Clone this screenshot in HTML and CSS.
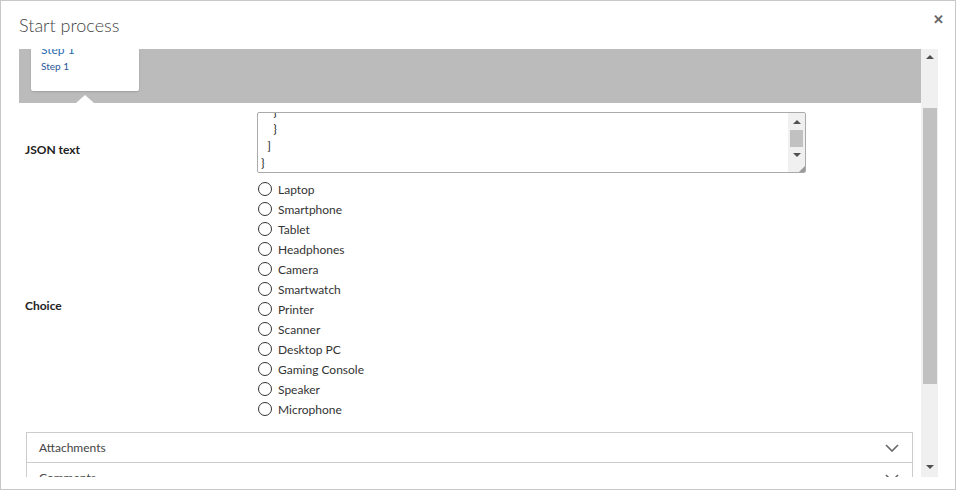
FILE: index.html
```html
<!DOCTYPE html>
<html lang="en">
<head>
    <meta charset="UTF-8">
    <meta name="viewport" content="width=device-width, initial-scale=1.0">
    <title>Start process</title>
    <link rel="stylesheet" href="styles.css">
</head>
<body>
    <div class="dialog">
        <div class="header">
            <h1>Start process</h1>
            <span class="close">&#x2715;</span>
        </div>

        <div class="body">
            <div class="viewport">
                <div class="steps">
                    <div class="step-card">
                        <div class="step-title">Step 1</div>
                        <div class="step-sub">Step 1</div>
                    </div>
                    <span class="notch"></span>
                </div>

                <div class="form-row row-json">
                    <div class="field-label">JSON text</div>
                    <div class="field">
                        <div class="fake-textarea">
                            <div class="ta-text">
                                <div class="ta-line">&nbsp;&nbsp;&nbsp;&nbsp;}</div>
                                <div class="ta-line">&nbsp;&nbsp;&nbsp;&nbsp;}</div>
                                <div class="ta-line">&nbsp;&nbsp;]</div>
                                <div class="ta-line">}</div>
                            </div>
                            <div class="ta-scroll">
                                <span class="arrow-up"></span>
                                <span class="ta-thumb"></span>
                                <span class="arrow-down"></span>
                            </div>
                            <span class="grip"></span>
                        </div>
                    </div>
                </div>

                <div class="form-row row-choice">
                    <div class="field-label">Choice</div>
                    <div class="field radios">
                        <label class="radio"><span class="circle"></span>Laptop</label>
                        <label class="radio"><span class="circle"></span>Smartphone</label>
                        <label class="radio"><span class="circle"></span>Tablet</label>
                        <label class="radio"><span class="circle"></span>Headphones</label>
                        <label class="radio"><span class="circle"></span>Camera</label>
                        <label class="radio"><span class="circle"></span>Smartwatch</label>
                        <label class="radio"><span class="circle"></span>Printer</label>
                        <label class="radio"><span class="circle"></span>Scanner</label>
                        <label class="radio"><span class="circle"></span>Desktop PC</label>
                        <label class="radio"><span class="circle"></span>Gaming Console</label>
                        <label class="radio"><span class="circle"></span>Speaker</label>
                        <label class="radio"><span class="circle"></span>Microphone</label>
                    </div>
                </div>

                <div class="accordion">
                    <div class="acc-item">
                        <span>Attachments</span>
                        <svg class="chevron" width="14" height="8" viewBox="0 0 14 8"><path d="M1 1 L7 7 L13 1" fill="none" stroke="#666" stroke-width="1.6"/></svg>
                    </div>
                    <div class="acc-item">
                        <span>Comments</span>
                        <svg class="chevron" width="14" height="8" viewBox="0 0 14 8"><path d="M1 1 L7 7 L13 1" fill="none" stroke="#666" stroke-width="1.6"/></svg>
                    </div>
                </div>
            </div>

            <div class="vscroll">
                <span class="arrow-up"></span>
                <span class="thumb"></span>
                <span class="spacer"></span>
                <span class="arrow-down"></span>
            </div>
        </div>
    </div>
</body>
</html>
```

FILE: styles.css
```css
body {
    margin: 0;
    font-family: "Segoe UI", Lato, "Open Sans", sans-serif;
    color: #333;
    background: #fff;
}

.dialog {
    width: 956px;
    height: 490px;
    box-sizing: border-box;
    border: 1px solid #c8c8c8;
    background: #fff;
    overflow: hidden;
}

.header {
    height: 48px;
    display: flex;
    justify-content: space-between;
    align-items: flex-start;
    padding: 0 11px 0 18px;
}

.header h1 {
    margin: 13px 0 0;
    font-size: 18px;
    font-weight: 300;
    color: #444;
    line-height: 22px;
}

.close {
    margin-top: 10px;
    font-size: 13px;
    font-weight: bold;
    color: #666;
}

.body {
    display: flex;
    height: 428px;
    margin: 0 17px 0 18px;
}

.viewport {
    flex: 1;
    overflow: hidden;
}

.steps {
    position: relative;
    height: 54px;
    background: #bbbbbb;
    padding-left: 12px;
}

.step-card {
    width: 108px;
    height: 42px;
    background: #fff;
    border-radius: 0 0 2px 2px;
    box-shadow: 0 1px 2px rgba(0,0,0,0.15);
    padding-left: 10px;
    box-sizing: border-box;
    overflow: hidden;
}

.step-title {
    margin-top: -8px;
    font-size: 12px;
    line-height: 17px;
    color: #2b6cb0;
}

.step-sub {
    margin-top: 1px;
    font-size: 10px;
    line-height: 14px;
    color: #2b579a;
}

.notch {
    position: absolute;
    left: 57px;
    bottom: 0;
    width: 0;
    height: 0;
    border-left: 9px solid transparent;
    border-right: 9px solid transparent;
    border-bottom: 8px solid #fff;
}

.form-row {
    display: flex;
}

.field-label {
    width: 238px;
    padding-left: 6px;
    box-sizing: border-box;
    display: flex;
    align-items: center;
    padding-top: 13px;
    font-size: 12px;
    font-weight: bold;
    color: #222;
}

.row-json {
    padding-top: 9px;
}

.row-choice {
    padding-top: 6px;
}

.fake-textarea {
    position: relative;
    width: 549px;
    height: 61px;
    box-sizing: border-box;
    border: 1px solid #aaa;
    border-radius: 2px;
    display: flex;
    overflow: hidden;
}

.ta-text {
    flex: 1;
    margin-top: -10px;
    padding-left: 3px;
    font-size: 12px;
    line-height: 17px;
    color: #222;
}

.ta-scroll {
    width: 17px;
    background: #f0f0f0;
    display: flex;
    flex-direction: column;
    align-items: center;
}

.ta-scroll .arrow-up {
    margin-top: 7px;
}

.ta-thumb {
    width: 13px;
    height: 17px;
    margin-top: 6px;
    background: #c1c1c1;
}

.ta-scroll .arrow-down {
    margin-top: 6px;
}

.grip {
    position: absolute;
    right: 0;
    bottom: 0;
    width: 0;
    height: 0;
    border-left: 6px solid transparent;
    border-bottom: 6px solid #999;
}

.arrow-up {
    width: 0;
    height: 0;
    border-left: 4px solid transparent;
    border-right: 4px solid transparent;
    border-bottom: 4px solid #505050;
}

.arrow-down {
    width: 0;
    height: 0;
    border-left: 4px solid transparent;
    border-right: 4px solid transparent;
    border-top: 4px solid #505050;
}

.radios {
    display: flex;
    flex-direction: column;
}

.radio {
    display: flex;
    align-items: center;
    height: 20px;
    font-size: 12px;
    color: #333;
}

.circle {
    width: 12px;
    height: 12px;
    border: 1px solid #333;
    border-radius: 50%;
    margin: 0 6px 0 1px;
}

.accordion {
    margin: 13px 8px 0 7px;
    border: 1px solid #ccc;
    border-bottom: none;
}

.acc-item {
    height: 29px;
    border-bottom: 1px solid #ccc;
    display: flex;
    align-items: center;
    justify-content: space-between;
    padding: 0 13px 0 12px;
    font-size: 12px;
    color: #444;
}

.vscroll {
    width: 17px;
    background: #f0f0f0;
    display: flex;
    flex-direction: column;
    align-items: center;
}

.vscroll .arrow-up {
    margin-top: 6px;
}

.thumb {
    width: 14px;
    height: 276px;
    margin-top: 49px;
    background: #c1c1c1;
}

.spacer {
    flex: 1;
}

.vscroll .arrow-down {
    margin-bottom: 8px;
}
```
